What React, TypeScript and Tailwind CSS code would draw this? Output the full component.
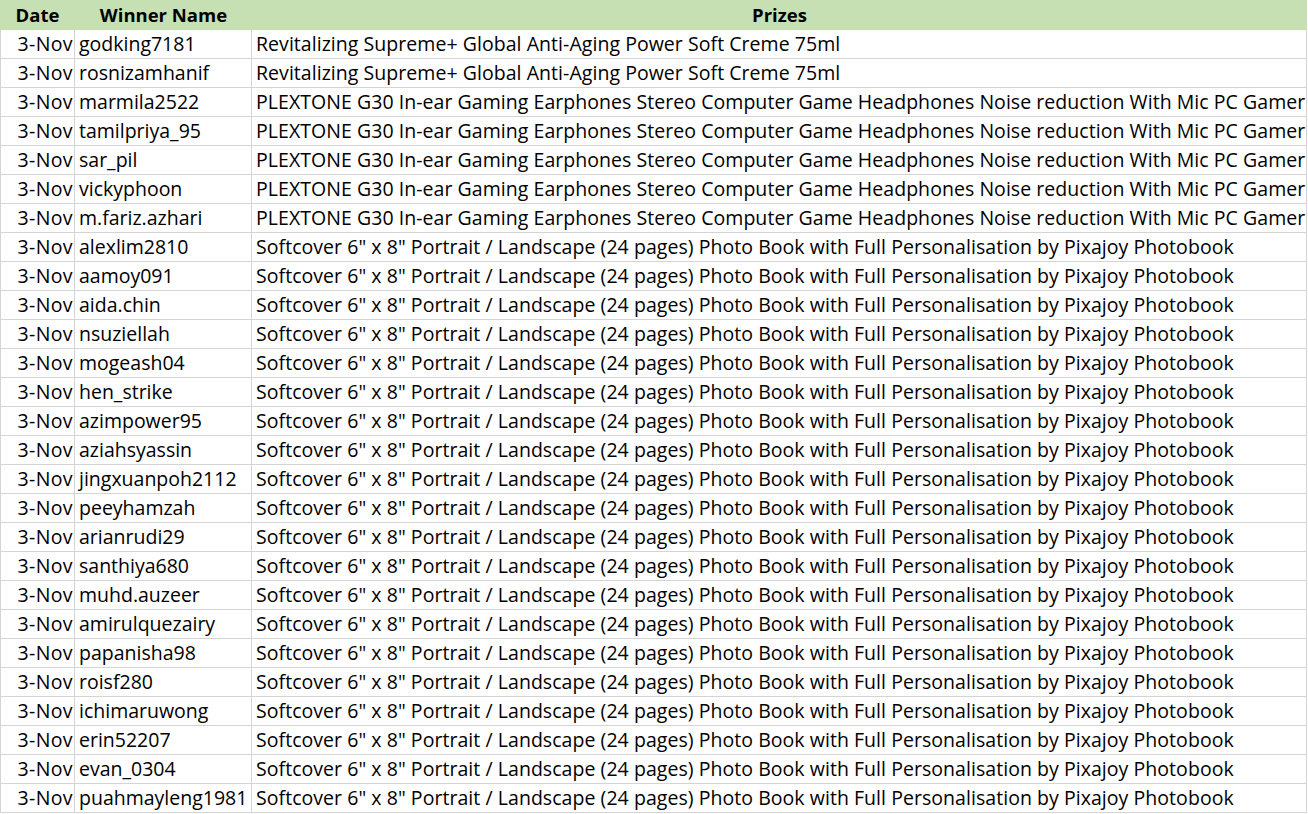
import React from "react";

const REV = "Revitalizing Supreme+ Global Anti-Aging Power Soft Creme 75ml";
const PLX =
  "PLEXTONE G30 In-ear Gaming Earphones Stereo Computer Game Headphones Noise reduction With Mic PC Gamer Headset";
const PHB =
  'Softcover 6" x 8" Portrait / Landscape (24 pages) Photo Book with Full Personalisation by Pixajoy Photobook';

const rows: [string, string][] = [
  ["godking7181", REV],
  ["rosnizamhanif", REV],
  ["marmila2522", PLX],
  ["tamilpriya_95", PLX],
  ["sar_pil", PLX],
  ["vickyphoon", PLX],
  ["m.fariz.azhari", PLX],
  ["alexlim2810", PHB],
  ["aamoy091", PHB],
  ["aida.chin", PHB],
  ["nsuziellah", PHB],
  ["mogeash04", PHB],
  ["hen_strike", PHB],
  ["azimpower95", PHB],
  ["aziahsyassin", PHB],
  ["jingxuanpoh2112", PHB],
  ["peeyhamzah", PHB],
  ["arianrudi29", PHB],
  ["santhiya680", PHB],
  ["muhd.auzeer", PHB],
  ["amirulquezairy", PHB],
  ["papanisha98", PHB],
  ["roisf280", PHB],
  ["ichimaruwong", PHB],
  ["erin52207", PHB],
  ["evan_0304", PHB],
  ["puahmayleng1981", PHB],
];

export default function App() {
  return (
    <div
      className="w-[1308px] h-[814px] overflow-hidden bg-white text-black"
      style={{ fontFamily: '"Open Sans", "Noto Sans", sans-serif' }}
    >
      <div className="grid grid-cols-[75px_177px_1055px] w-[1307px]">
        <div className="h-[30px] bg-[#c6e0b4] flex items-center justify-center font-bold text-[18.5px]">Date</div>
        <div className="h-[30px] bg-[#c6e0b4] flex items-center justify-center font-bold text-[18.5px]">Winner Name</div>
        <div className="h-[30px] bg-[#c6e0b4] flex items-center justify-center font-bold text-[18.5px]">Prizes</div>
        {rows.map(([name, prize], i) => (
          <React.Fragment key={i}>
            <div className="h-[29px] border-l border-b border-r border-[#d4d4d4] flex items-center justify-end pr-[1px] text-[19.5px] tracking-[0.4px] whitespace-nowrap overflow-hidden">
              3-Nov
            </div>
            <div className="h-[29px] border-b border-r border-[#d4d4d4] flex items-center pl-[4px] text-[19.5px] whitespace-nowrap overflow-hidden">
              {name}
            </div>
            <div className="h-[29px] border-b border-r border-[#d4d4d4] flex items-center pl-[4px] text-[19.5px] tracking-[0.05px] whitespace-nowrap overflow-hidden">
              {prize}
            </div>
          </React.Fragment>
        ))}
      </div>
    </div>
  );
}
